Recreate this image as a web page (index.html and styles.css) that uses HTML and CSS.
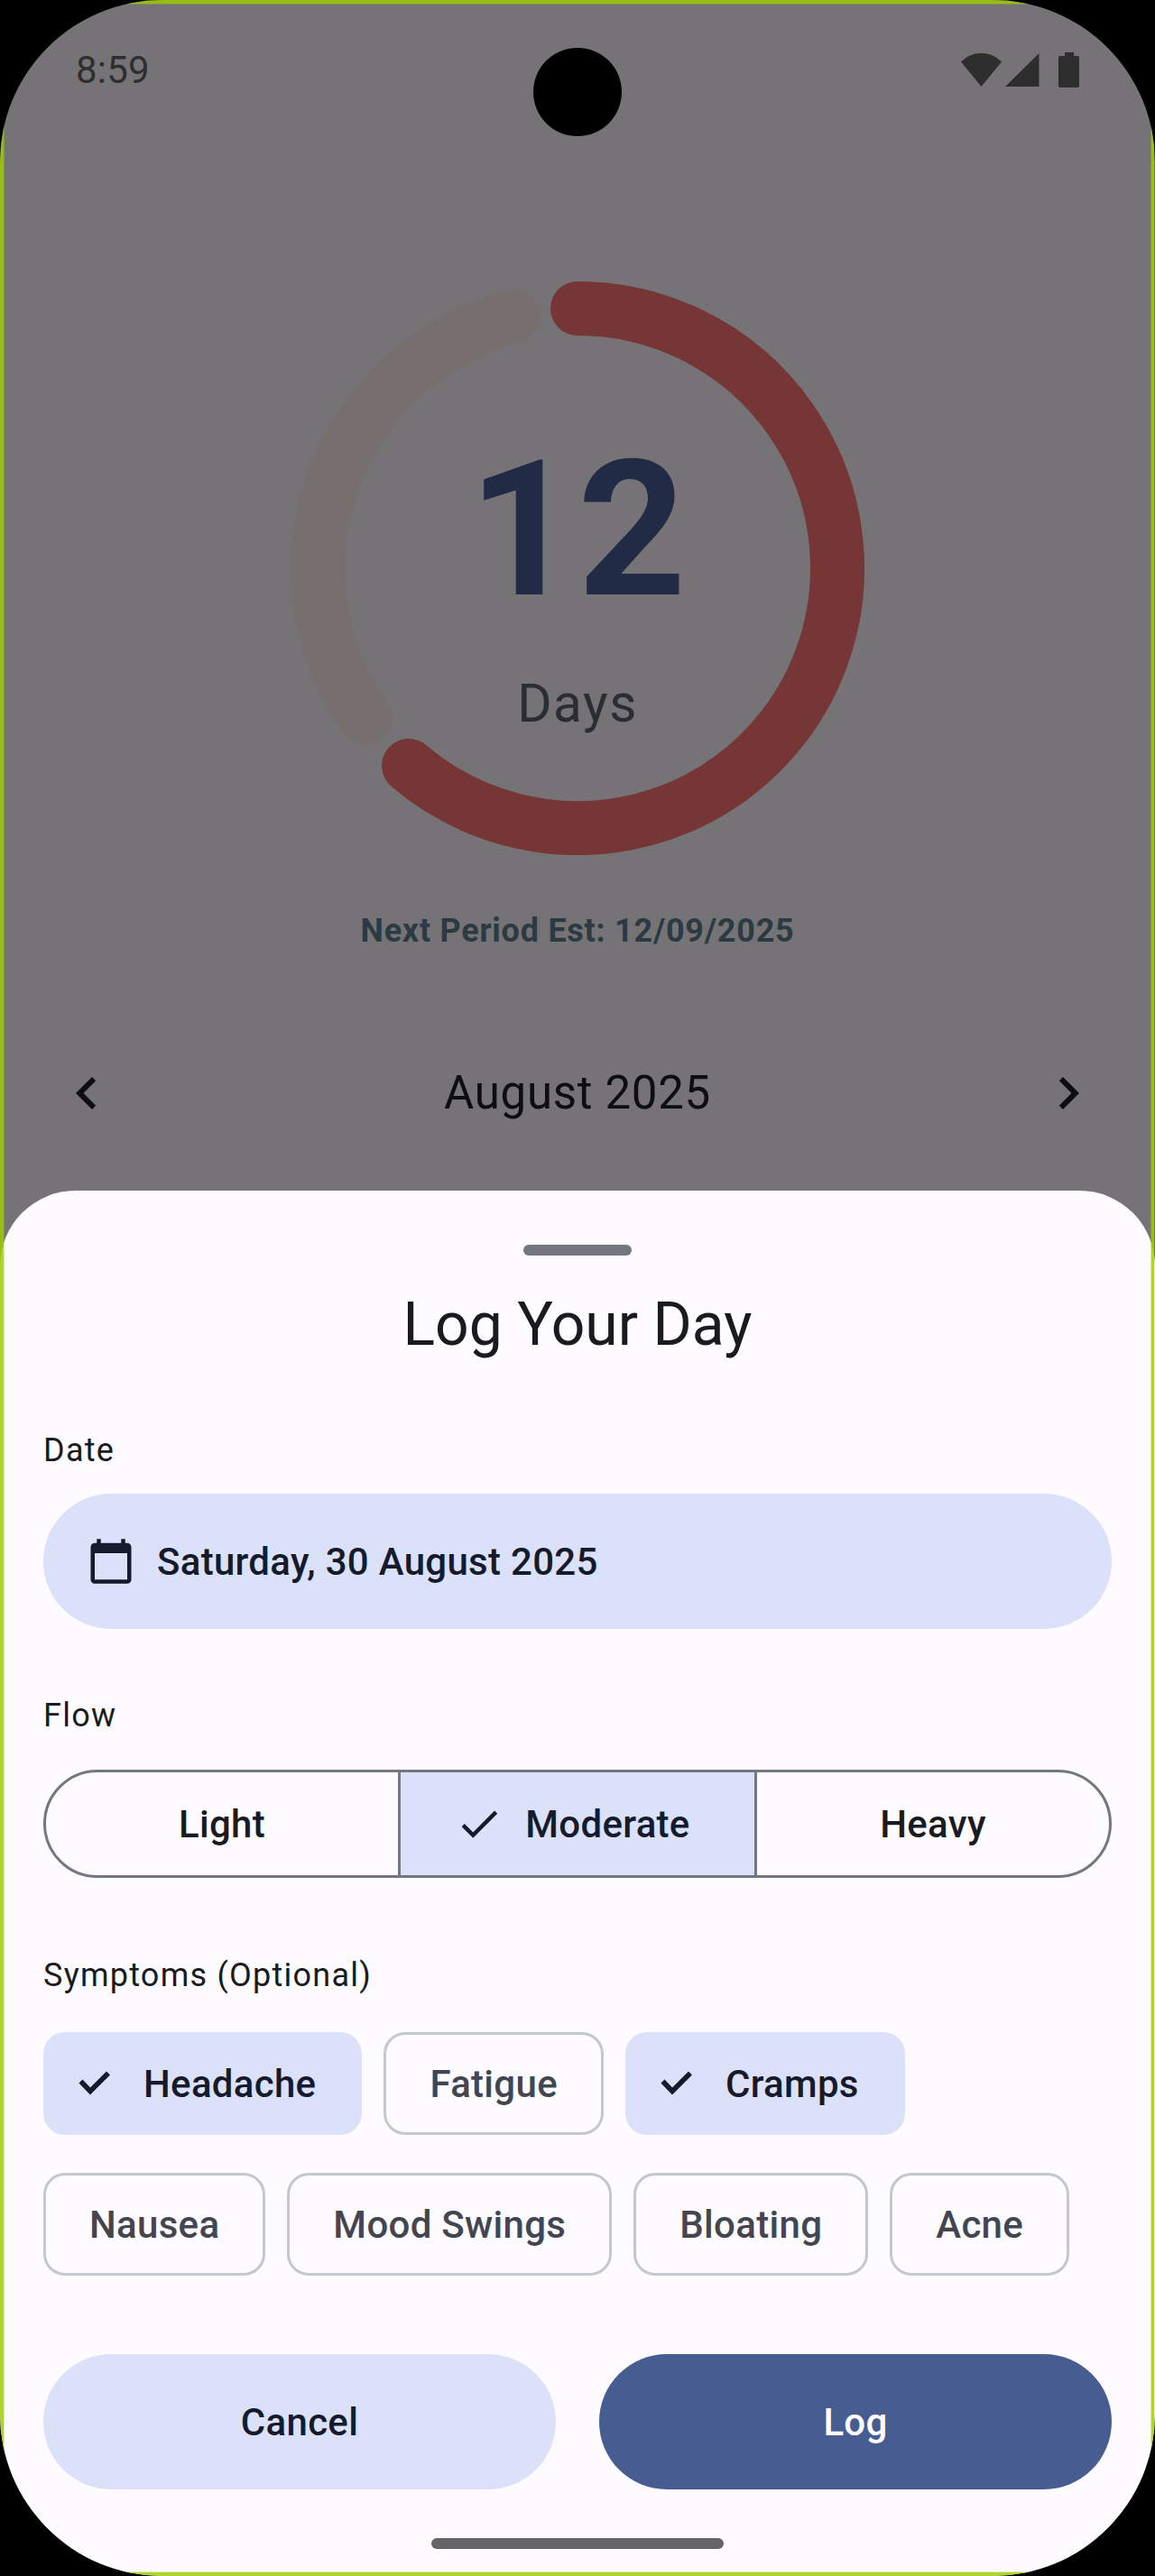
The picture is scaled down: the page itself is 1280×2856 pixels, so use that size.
FILE: index.html
```html
<!DOCTYPE html>
<html lang="en">
<head>
<meta charset="utf-8">
<title>Log Your Day</title>
<link rel="stylesheet" href="styles.css">
</head>
<body>
<div class="screen">
  <header class="status">
    <span class="time">8:59</span>
    <svg class="status-icons" width="132" height="40" viewBox="0 0 132 40">
      <path d="M0 10.5Q9 1 22.5 1T45 10.5L22.5 38Z"/>
      <path d="M49 38L86.5 1V38Z"/>
      <path d="M115 0h10v4h4a2 2 0 0 1 2 2v31a2 2 0 0 1-2 2h-19a2 2 0 0 1-2-2V6a2 2 0 0 1 2-2h5z"/>
    </svg>
  </header>
  <span class="camera"></span>

  <main class="dashboard">
    <div class="cycle">
      <svg class="ring" width="636" height="636" viewBox="-318 -318 636 636">
        <path class="ring-rest" d="M-235 166A288 288 0 0 1-71 -279"/>
        <path class="ring-done" d="M0-288A288 288 0 1 1-187 219"/>
      </svg>
      <div class="count">
        <span class="number">12</span>
        <span class="unit">Days</span>
      </div>
    </div>
    <p class="next">Next Period Est: 12/09/2025</p>
    <div class="month">
      <svg width="72" height="72" viewBox="0 0 24 24"><path d="M15.41 7.41 14 6l-6 6 6 6 1.41-1.41L10.83 12z"/></svg>
      <span>August 2025</span>
      <svg width="72" height="72" viewBox="0 0 24 24"><path d="M8.59 16.59 10 18l6-6-6-6-1.41 1.41L13.17 12z"/></svg>
    </div>
  </main>

  <section class="sheet">
    <span class="handle"></span>
    <h1 class="title">Log Your Day</h1>

    <h2 class="label label-date">Date</h2>
    <button class="btn date">
      <svg width="54" height="54" viewBox="0 0 24 24"><path d="M20 3h-1V1h-2v2H7V1H5v2H4c-1.1 0-2 .9-2 2v16c0 1.1.9 2 2 2h16c1.1 0 2-.9 2-2V5c0-1.1-.9-2-2-2zm0 18H4V8h16v13z"/></svg>
      <span>Saturday, 30 August 2025</span>
    </button>

    <h2 class="label label-flow">Flow</h2>
    <div class="segments">
      <button class="segment"><span>Light</span></button>
      <button class="segment selected">
        <svg width="54" height="54" viewBox="0 0 24 24"><path d="M9 16.2 4.8 12l-1.4 1.4L9 19 21 7l-1.4-1.4z"/></svg>
        <span>Moderate</span>
      </button>
      <button class="segment"><span>Heavy</span></button>
    </div>

    <h2 class="label label-symptoms">Symptoms (Optional)</h2>
    <div class="chips">
      <div class="chip-row">
        <button class="chip on"><svg width="36" height="28" viewBox="0 0 36 28"><path d="M2.5 11.5 13 22.5 33 2.5"/></svg><span>Headache</span></button>
        <button class="chip"><span>Fatigue</span></button>
        <button class="chip on"><svg width="36" height="28" viewBox="0 0 36 28"><path d="M2.5 11.5 13 22.5 33 2.5"/></svg><span>Cramps</span></button>
      </div>
      <div class="chip-row">
        <button class="chip"><span>Nausea</span></button>
        <button class="chip"><span>Mood Swings</span></button>
        <button class="chip"><span>Bloating</span></button>
        <button class="chip"><span>Acne</span></button>
      </div>
    </div>

    <div class="actions">
      <button class="btn"><span>Cancel</span></button>
      <button class="btn primary"><span>Log</span></button>
    </div>
    <span class="home-bar"></span>
  </section>
  <span class="edge"></span>
</div>
</body>
</html>
```
FILE: styles.css
```css
* { box-sizing: border-box; }

body {
  margin: 0;
  background: #000;
  font-family: Roboto, sans-serif;
}

h1, h2, p { margin: 0; font-weight: 400; }

button {
  margin: 0;
  padding: 0;
  border: 0;
  background: none;
  color: inherit;
  font: 500 42px/60px Roboto, sans-serif;
  letter-spacing: 0.3px;
}
button span { display: block; padding-top: 2px; }

svg { display: block; flex: none; fill: currentColor; }

.screen {
  position: relative;
  width: 1280px;
  height: 2856px;
  border-radius: 180px;
  overflow: hidden;
  background: #767377;
}

/* Status bar */
.status {
  display: flex;
  align-items: center;
  justify-content: space-between;
  height: 156px;
  padding: 0 83px 0 84px;
  color: #2e2e2e;
}
.time { font-size: 42px; line-height: 60px; letter-spacing: 0.2px; }

.camera {
  position: absolute;
  top: 53px;
  left: 591px;
  width: 98px;
  height: 98px;
  border-radius: 50%;
  background: #000;
}

/* Dashboard behind the sheet */
.dashboard { height: 1164px; padding-top: 156px; }

.cycle {
  display: grid;
  justify-content: center;
}
.cycle > * { grid-area: 1 / 1; }
.ring { fill: none; stroke-width: 60; stroke-linecap: round; }
.ring-rest { stroke: #766f6e; }
.ring-done { stroke: #753635; }

.count {
  display: flex;
  flex-direction: column;
  align-items: center;
  padding-top: 155px;
}
.number {
  color: #212b45;
  font-size: 210px;
  font-weight: 700;
  line-height: 240px;
  letter-spacing: 0.5px;
}
.unit {
  margin-top: 33px;
  color: #2b2d34;
  font-size: 58.5px;
  line-height: 80px;
  letter-spacing: 1.5px;
}

.next {
  margin-top: 60px;
  color: #2c3a42;
  font-size: 36px;
  font-weight: 700;
  line-height: 48px;
  letter-spacing: 0.74px;
  text-align: center;
}

.month {
  display: flex;
  align-items: center;
  justify-content: space-between;
  height: 72px;
  margin-top: 120px;
  padding: 0 60px;
  color: #0e0e10;
  font-size: 51px;
  line-height: 72px;
  letter-spacing: 0.7px;
}

/* Bottom sheet */
.sheet {
  display: flex;
  flex-direction: column;
  height: 1536px;
  padding: 60px 48px 30px;
  border-radius: 84px 84px 0 0;
  background: #fdfbff;
  color: #1a1b20;
}

.handle {
  align-self: center;
  width: 120px;
  height: 12px;
  border-radius: 6px;
  background: #74777f;
}

.title {
  margin-top: 35px;
  font-size: 66px;
  line-height: 84px;
  text-align: center;
}

.label { font-size: 36px; line-height: 48px; letter-spacing: 1.25px; }
.label-date { margin: 73px 0 24px; }
.label-flow { margin: 72px 0 36px; }
.label-symptoms { margin: 84px 0 39px; }

.btn {
  height: 150px;
  border-radius: 75px;
  background: #dce1fa;
  color: #151b2c;
}
.date {
  display: flex;
  align-items: center;
  gap: 24px;
  padding-left: 48px;
}

.segments {
  display: grid;
  grid-template-columns: 390px 395px 1fr;
  height: 120px;
  border: 3px solid #74777f;
  border-radius: 60px;
  overflow: hidden;
}
.segment {
  display: flex;
  align-items: center;
  justify-content: center;
}
.segment + .segment { border-left: 3px solid #74777f; }
.segment.selected {
  gap: 24px;
  padding-right: 11px;
  background: #dce1fa;
  color: #151b2c;
}

.chips { display: flex; flex-direction: column; gap: 42px; }
.chip-row { display: flex; gap: 24px; }
.chip {
  display: flex;
  align-items: center;
  height: 114px;
  padding: 0 48px;
  border: 3px solid #c4c6d0;
  border-radius: 24px;
  color: #44464f;
}
.chip.on {
  gap: 36px;
  padding: 0 51px 0 39px;
  border: 0;
  background: #dce1fa;
  color: #151b2c;
}
.chip svg { fill: none; stroke: currentColor; stroke-width: 5.6; }

.actions {
  display: grid;
  grid-template-columns: 1fr 1fr;
  gap: 48px;
  margin-top: 87px;
}
.primary { background: #475d92; color: #fff; }

.home-bar {
  align-self: center;
  width: 324px;
  height: 12px;
  margin-top: 54px;
  border-radius: 6px;
  background: #666367;
}

/* Light line running along the display edge */
.edge {
  position: absolute;
  inset: 0 1px 0 0;
  border: 4px solid rgba(158, 205, 3, 0.83);
  border-right-width: 3px;
  box-shadow: inset 0 0 0 1px rgba(158, 205, 3, 0.35);
  pointer-events: none;
}
```
